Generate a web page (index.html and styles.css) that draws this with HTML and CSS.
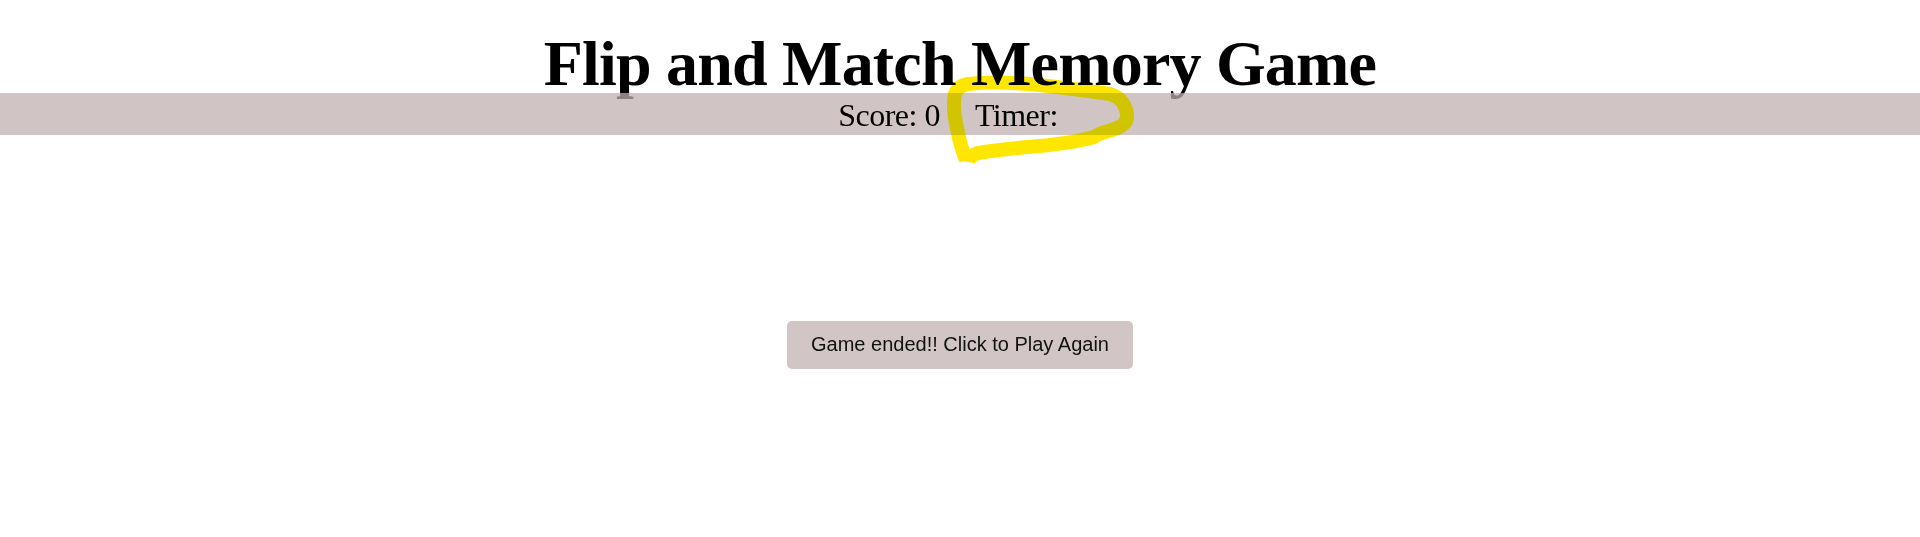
FILE: index.html
```html
<!DOCTYPE html>
<html lang="en">
<head>
<meta charset="utf-8">
<title>Flip and Match Memory Game</title>
<link rel="stylesheet" href="styles.css">
</head>
<body>
  <h1 class="title">Flip and Match Memory Game</h1>
  <div class="status-bar">
    <span class="score">Score: 0</span><span class="timer">Timer:<span class="time"></span></span>
  </div>
  <main class="board">
    <button class="play-again" type="button">Game ended!! Click to Play Again</button>
  </main>
  <svg class="scribble" width="200" height="110" viewBox="940 66 200 110" aria-hidden="true">
    <path d="M966 160 C962 150 959 140 957 128 C954 115 953 103 955 94 C957 88 962 85 968 84 C985 82 1010 82 1040 85 C1065 88 1090 91 1110 94 C1121 97 1126 106 1127 114 C1128 122 1122 127 1112 130 C1104 132 1098 134 1094 137 C1080 141 1060 144 1040 146 C1015 148 995 150 978 153 C972 155 969 157 968 162"
      fill="none" stroke="#ffe600" stroke-width="14" stroke-linecap="butt" stroke-linejoin="round"/>
  </svg>
</body>
</html>
```

FILE: styles.css
```css
html, body {
  margin: 0;
  padding: 0;
  background: #ffffff;
}

body {
  font-family: "Liberation Serif", "Times New Roman", serif;
  color: #000;
  position: relative;
  min-height: 537px;
}

.title {
  margin: 34px 0 0;
  font-size: 64px;
  font-weight: bold;
  line-height: 59px;
  letter-spacing: -0.8px;
  text-align: center;
}

.status-bar {
  position: relative;
  background: rgba(193, 176, 176, 0.74);
  font-size: 32px;
  line-height: 37px;
  letter-spacing: -0.5px;
  padding: 4px 0 1px;
  text-align: center;
}

.score {
  margin-right: 35px;
}

.time {
  display: inline-block;
  width: 24px;
}

.board {
  padding-top: 186px;
  display: flex;
  justify-content: center;
}

.play-again {
  font-family: "Liberation Sans", Arial, sans-serif;
  font-size: 20px;
  line-height: 23px;
  color: #111;
  background: #d1c5c5;
  border: none;
  border-radius: 5px;
  padding: 12px 24px 13px;
  cursor: pointer;
}

.scribble {
  position: absolute;
  left: 940px;
  top: 66px;
  pointer-events: none;
  mix-blend-mode: darken;
}
```
